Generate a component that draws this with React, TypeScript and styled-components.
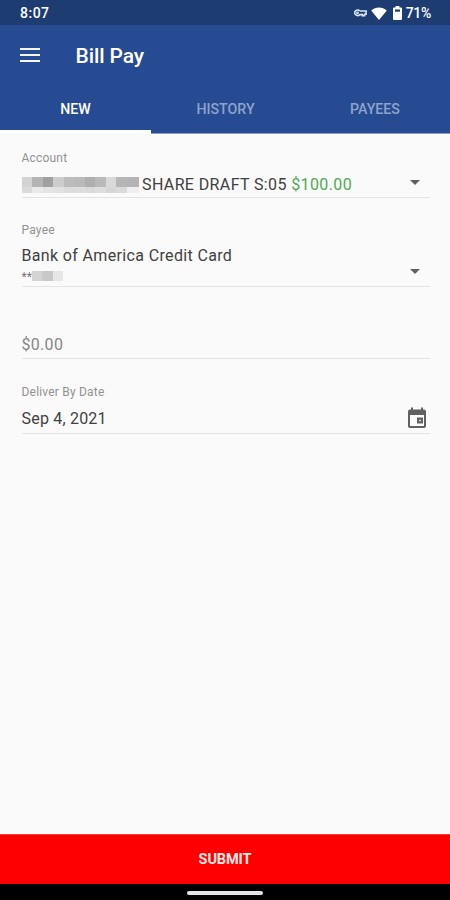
import React from "react";
import styled, { createGlobalStyle } from "styled-components";

const GlobalStyle = createGlobalStyle`
  * { box-sizing: border-box; }
  body { margin: 0; background: #fafafa; font-family: Roboto, "Noto Sans", sans-serif; }
  button { font-family: inherit; border: 0; padding: 0; background: none; }
`;

const Screen = styled.div`
  width: 450px;
  height: 900px;
  display: flex;
  flex-direction: column;
  overflow: hidden;
  background: #fafafa;
`;

const StatusBar = styled.div`
  height: 25px;
  flex: none;
  display: flex;
  align-items: center;
  justify-content: space-between;
  padding: 1px 19px 0 20px;
  background: #1d3c72;
  color: #fff;
  font-size: 14px;
  font-weight: 500;
  line-height: 16px;
`;

const Clock = styled.span`
  letter-spacing: 0.5px;
`;

const StatusIcons = styled.div`
  display: flex;
  align-items: center;
`;

const WifiIcon = styled.svg`
  margin-left: 4px;
`;

const BatteryIcon = styled.svg`
  margin-left: 6px;
`;

const Battery = styled.span`
  margin-left: 4px;
  letter-spacing: -0.3px;
`;

const Header = styled.header`
  height: 109px;
  flex: none;
  background: #264b92;
  color: #fff;
`;

const Toolbar = styled.div`
  height: 60px;
  display: flex;
  align-items: center;
  padding-left: 20px;
`;

const MenuButton = styled.button`
  width: 20px;
  height: 14px;
  display: flex;
  flex-direction: column;
  justify-content: space-between;
`;

const MenuLine = styled.span`
  display: block;
  height: 2px;
  background: #f4f6ff;
`;

const Title = styled.h1`
  margin: 1px 0 0 35.5px;
  font-size: 21px;
  font-weight: 500;
  line-height: 24px;
  letter-spacing: -0.1px;
`;

const Tabs = styled.nav`
  height: 49px;
  display: grid;
  grid-template-columns: 151px 149px 150px;
`;

const Tab = styled.button<{ $active?: boolean }>`
  color: ${(p) => (p.$active ? "#fff" : "#8ea3cb")};
  font-size: 14.2px;
  font-weight: 500;
  line-height: 16px;
  padding-top: ${(p) => (p.$active ? "3px" : "0")};
  border-bottom: ${(p) => (p.$active ? "4px solid #fff" : "1px solid #9499c2")};
`;

const Form = styled.main`
  flex: 1;
  padding: 0 20px 0 21.5px;
`;

const Field = styled.section<{ $height: number }>`
  height: ${(p) => p.$height}px;
  display: flex;
  flex-direction: column;
  justify-content: flex-end;
  border-bottom: 1px solid #e3e3e3;
`;

const Label = styled.label`
  color: #929292;
  font-size: 12px;
  line-height: 14px;
  letter-spacing: 0.2px;
`;

const Row = styled.div<{ $top: number; $bottom: number }>`
  display: flex;
  align-items: center;
  justify-content: space-between;
  padding: 0 10px 0 0;
  margin: ${(p) => p.$top}px 0 ${(p) => p.$bottom}px;
`;

const Value = styled.div<{ $muted?: boolean; $spacing?: number }>`
  display: flex;
  align-items: center;
  color: ${(p) => (p.$muted ? "#888" : "#414141")};
  font-size: 16px;
  line-height: 20px;
  letter-spacing: ${(p) => p.$spacing ?? 0}px;
  white-space: pre;
`;

const Amount = styled.span`
  color: #4fa953;
`;

const Mask = styled.span<{ $columns: string; $rows: string; $gap: number }>`
  display: grid;
  grid-template-columns: ${(p) => p.$columns};
  grid-template-rows: ${(p) => p.$rows};
  margin-right: ${(p) => p.$gap}px;
`;

const Shade = styled.i<{ $tone: string }>`
  background: ${(p) => p.$tone};
`;

const Caret = styled.span<{ $lift: number }>`
  width: 0;
  height: 0;
  margin-bottom: ${(p) => p.$lift}px;
  border: 5px solid transparent;
  border-top-color: #606060;
  border-bottom-width: 0;
`;

const PayeeNumber = styled.div`
  display: flex;
  height: 10px;
  color: #777;
  font-size: 12px;
  line-height: 12px;
`;

const CalendarIcon = styled.svg`
  margin: -2px -9px 0 0;
`;

const Submit = styled.button`
  height: 50px;
  flex: none;
  background: #fe0000;
  border-top: 1px solid #fb3a32;
  color: #ffe9e5;
  font-size: 14.5px;
  font-weight: 700;
  letter-spacing: -0.1px;
`;

const NavBar = styled.div`
  height: 16px;
  flex: none;
  display: flex;
  justify-content: center;
  padding-top: 7px;
  background: #000;
`;

const Handle = styled.span`
  width: 76px;
  height: 4px;
  border-radius: 2px;
  background: #e4e4e4;
`;

const accountShades = [
  "#d3d3d3", "#b4b4b4", "#a0a0a0", "#cdcdcd", "#bcbcbc", "#bababa", "#afafaf", "#b9b9b9", "#d9d9d9", "#b6b6b6", "#b4b4b4",
  "#dadada", "#e9e9e9", "#e5e5e5", "#e1e1e1", "#dcdcdc", "#dddddd", "#dadada", "#dddddd", "#d6d6d6", "#dadada", "#efefef",
];
const payeeShades = ["#d4d4d4", "#c8c8c8", "#e6e6e6"];

export default function App() {
  return (
    <Screen>
      <GlobalStyle />
      <StatusBar>
        <Clock>8:07</Clock>
        <StatusIcons>
          <svg width="14" height="8" viewBox="0 0 14 8" fill="none" stroke="#dce5f7" strokeWidth="1.6">
            <path d="M7 2A3.1 2.6 0 1 0 7 5.6H9.3V6.6H11.6V5.3H13.1V2H7" />
            <circle cx="4.5" cy="3.8" r="0.6" />
          </svg>
          <WifiIcon width="16" height="13" viewBox="0 0 16 13" fill="#fff">
            <path d="M8 13 0.2 3.5C4.6-.6 11.4-.6 15.8 3.5Z" />
          </WifiIcon>
          <BatteryIcon width="9" height="14" viewBox="0 0 9 14">
            <path d="M2.6 0h3.8v1.6H8a1 1 0 0 1 1 1V13a1 1 0 0 1-1 1H1a1 1 0 0 1-1-1V2.6a1 1 0 0 1 1-1h1.6Z" fill="#fff" />
            <path d="M2 3.5h5v2.2H2Z" fill="#1d3c72" />
          </BatteryIcon>
          <Battery>71%</Battery>
        </StatusIcons>
      </StatusBar>
      <Header>
        <Toolbar>
          <MenuButton aria-label="Menu">
            <MenuLine />
            <MenuLine />
            <MenuLine />
          </MenuButton>
          <Title>Bill Pay</Title>
        </Toolbar>
        <Tabs>
          <Tab $active>NEW</Tab>
          <Tab>HISTORY</Tab>
          <Tab>PAYEES</Tab>
        </Tabs>
      </Header>
      <Form>
        <Field $height={64}>
          <Label>Account</Label>
          <Row $top={10} $bottom={2}>
            <Value $spacing={0.38}>
              <Mask $columns="repeat(10, 10.5px) 12.5px" $rows="10px 6px" $gap={3}>
                {accountShades.map((tone, i) => <Shade key={i} $tone={tone} />)}
              </Mask>
              SHARE DRAFT S:05 <Amount>$100.00</Amount>
            </Value>
            <Caret $lift={5} />
          </Row>
        </Field>
        <Field $height={88.5}>
          <Label>Payee</Label>
          <Row $top={9} $bottom={0}>
            <Value $spacing={0.35}>Bank of America Credit Card</Value>
          </Row>
          <Row $top={3} $bottom={3}>
            <PayeeNumber>
              **
              <Mask $columns="10px 11px 10px" $rows="10px" $gap={0}>
                {payeeShades.map((tone, i) => <Shade key={i} $tone={tone} />)}
              </Mask>
            </PayeeNumber>
            <Caret $lift={9} />
          </Row>
        </Field>
        <Field $height={72.5}>
          <Row $top={0} $bottom={3}>
            <Value $muted $spacing={0.3}>$0.00</Value>
          </Row>
        </Field>
        <Field $height={75}>
          <Label>Deliver By Date</Label>
          <Row $top={9} $bottom={3}>
            <Value $spacing={0.2}>Sep 4, 2021</Value>
            <CalendarIcon width="24" height="24" viewBox="0 0 24 24" fill="#606060">
              <path
                fillRule="evenodd"
                d="M18 11.5h-6v6h6v-6zm-2.2 2.2v1.6h-1.6v-1.6zM16 1.5v2H8v-2H6v2H5c-1.11 0-1.99.9-1.99 2L3 20c0 1.1.89 2 2 2h14c1.1 0 2-.9 2-2V5.5c0-1.1-.9-2-2-2h-1v-2h-2zm3 18.5H5V9h14v11z"
              />
            </CalendarIcon>
          </Row>
        </Field>
      </Form>
      <Submit>SUBMIT</Submit>
      <NavBar>
        <Handle />
      </NavBar>
    </Screen>
  );
}
